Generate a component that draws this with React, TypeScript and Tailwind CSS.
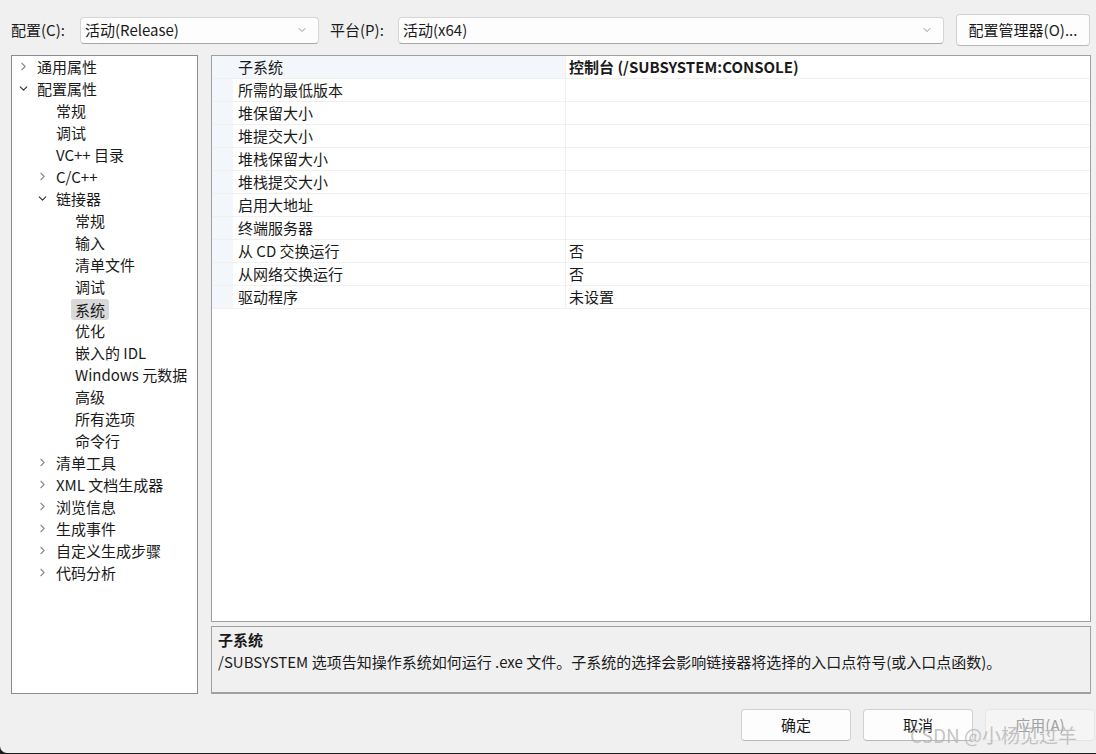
import { ChevronDown, ChevronRight } from "lucide-react";

// Property page dialog — linker / system settings

type TreeItem = {
  label: string;
  level: number;
  arrow?: "open" | "closed";
  selected?: boolean;
};

const TREE: TreeItem[] = [
  { label: "通用属性", level: 0, arrow: "closed" },
  { label: "配置属性", level: 0, arrow: "open" },
  { label: "常规", level: 1 },
  { label: "调试", level: 1 },
  { label: "VC++ 目录", level: 1 },
  { label: "C/C++", level: 1, arrow: "closed" },
  { label: "链接器", level: 1, arrow: "open" },
  { label: "常规", level: 2 },
  { label: "输入", level: 2 },
  { label: "清单文件", level: 2 },
  { label: "调试", level: 2 },
  { label: "系统", level: 2, selected: true },
  { label: "优化", level: 2 },
  { label: "嵌入的 IDL", level: 2 },
  { label: "Windows 元数据", level: 2 },
  { label: "高级", level: 2 },
  { label: "所有选项", level: 2 },
  { label: "命令行", level: 2 },
  { label: "清单工具", level: 1, arrow: "closed" },
  { label: "XML 文档生成器", level: 1, arrow: "closed" },
  { label: "浏览信息", level: 1, arrow: "closed" },
  { label: "生成事件", level: 1, arrow: "closed" },
  { label: "自定义生成步骤", level: 1, arrow: "closed" },
  { label: "代码分析", level: 1, arrow: "closed" },
];

const PROPS = [
  { name: "子系统", value: "控制台 (/SUBSYSTEM:CONSOLE)", bold: true },
  { name: "所需的最低版本", value: "" },
  { name: "堆保留大小", value: "" },
  { name: "堆提交大小", value: "" },
  { name: "堆栈保留大小", value: "" },
  { name: "堆栈提交大小", value: "" },
  { name: "启用大地址", value: "" },
  { name: "终端服务器", value: "" },
  { name: "从 CD 交换运行", value: "否" },
  { name: "从网络交换运行", value: "否" },
  { name: "驱动程序", value: "未设置" },
];

const indent = ["pl-[25px]", "pl-[44px]", "pl-[63px]"];

function Combo({ text, width }: { text: string; width: string }) {
  return (
    <div
      className={`${width} h-[27px] flex items-center justify-between bg-[#fdfdfd] border border-[#d6d6d6] border-b-[#a8a8a8] rounded-[4px] pl-[4px] pr-[10px]`}
    >
      <span>{text}</span>
      <ChevronDown size={12} strokeWidth={1.5} className="text-[#707070]" />
    </div>
  );
}

function DlgButton({ text, disabled }: { text: string; disabled?: boolean }) {
  return (
    <button
      className={`w-[110px] h-[32px] rounded-[4px] border flex items-center justify-center ${
        disabled
          ? "bg-[#f5f5f5] border-[#e5e5e5] text-[#a0a0a0]"
          : "bg-[#fdfdfd] border-[#d0d0d0] border-b-[#b8b8b8] text-[#1a1a1a]"
      }`}
    >
      {text}
    </button>
  );
}

export default function App() {
  return (
    <div className="w-[1096px] h-[754px] bg-[#1c1c1c] overflow-hidden">
      <div
        className="relative w-[1096px] h-[753px] pt-[14px] bg-[#f0f0f0] rounded-bl-[7px] text-[15px] text-[#1a1a1a] leading-[20px]"
        style={{ fontFamily: '"Noto Sans CJK SC", "Noto Sans", sans-serif' }}
      >
        {/* top config row */}
        <div className="flex items-center h-[32px] pl-[11px]">
          <span className="w-[69px]">配置(C):</span>
          <Combo text="活动(Release)" width="w-[239px]" />
          <span className="ml-[11px] w-[68px]">平台(P):</span>
          <Combo text="活动(x64)" width="w-[546px]" />
          <button className="ml-[12px] w-[134px] h-[32px] bg-[#fdfdfd] border border-[#d0d0d0] border-b-[#b8b8b8] rounded-[4px]">
            配置管理器(O)...
          </button>
        </div>

        {/* main area */}
        <div className="flex mt-[9px] ml-[11px] h-[639px]">
          {/* tree */}
          <div className="w-[187px] h-[639px] bg-white border border-[#8b8b93] overflow-hidden">
            {TREE.map((t, i) => (
              <div key={i} className={`h-[22px] flex items-center ${indent[t.level]} relative`}>
                {t.arrow && (
                  <span className="absolute top-[4px]" style={{ left: 5 + t.level * 19 }}>
                    {t.arrow === "open" ? (
                      <ChevronDown size={13} strokeWidth={2} className="text-[#303030]" />
                    ) : (
                      <ChevronRight size={13} strokeWidth={2} className="text-[#8a8a8a]" />
                    )}
                  </span>
                )}
                <span
                  className={`px-[4px] -ml-[4px] whitespace-nowrap ${
                    t.selected ? "bg-[#d9d9d9] rounded-[3px] h-[21px] leading-[21px]" : ""
                  }`}
                >
                  {t.label}
                </span>
              </div>
            ))}
          </div>

          {/* right column */}
          <div className="ml-[13px] w-[880px] flex flex-col">
            <div className="h-[567px] bg-white border border-[#a0a0a0]">
              <div className="flex flex-col">
                {PROPS.map((p, i) => (
                  <div key={i} className="flex h-[23px] border-b border-[#f0f0f0]">
                    <div className="w-[21px] bg-[#f3f7fc]" />
                    <div
                      className={`w-[333px] pl-[5px] flex items-center border-r border-[#f0f0f0] ${
                        i === 0 ? "bg-[#f3f7fc]" : ""
                      }`}
                    >
                      {p.name}
                    </div>
                    <div className={`flex-1 pl-[3px] flex items-center ${p.bold ? "font-bold" : ""}`}>
                      {p.value}
                    </div>
                  </div>
                ))}
              </div>
            </div>
            <div className="mt-[4px] h-[68px] bg-[#f0f0f0] border border-[#a0a0a0] border-b-2 px-[6px] pt-[2px]">
              <div className="font-bold h-[21px] leading-[21px]">子系统</div>
              <div className="h-[23px] leading-[23px] whitespace-nowrap">
                /SUBSYSTEM 选项告知操作系统如何运行 .exe 文件。子系统的选择会影响链接器将选择的入口点符号(或入口点函数)。
              </div>
            </div>
          </div>
        </div>

        {/* dialog buttons */}
        <div className="flex justify-end gap-[12px] mt-[15px] pr-[1px]">
          <DlgButton text="确定" />
          <DlgButton text="取消" />
          <DlgButton text="应用(A)" disabled />
        </div>

        {/* watermark */}
        <div className="absolute left-[910px] top-[721px] text-[19px] leading-[28px] text-[#b4b4b4]/80">
          CSDN @小杨见过羊
        </div>
      </div>
    </div>
  );
}
